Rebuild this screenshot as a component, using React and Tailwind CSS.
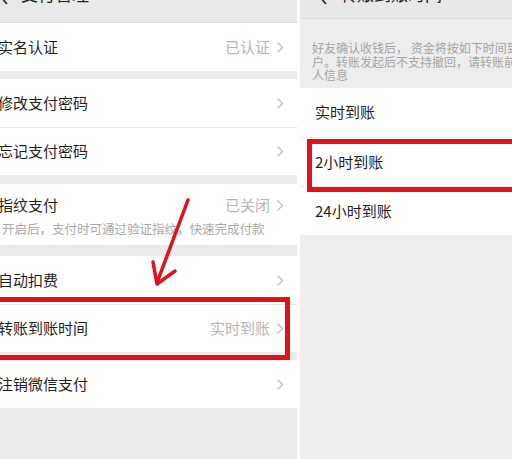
import React from 'react'

const font = { fontFamily: '"Noto Sans CJK SC", "Noto Sans", sans-serif' }

function Chevron() {
  return (
    <svg width="8" height="13" viewBox="0 0 8 13" className="ml-[6px] shrink-0">
      <polyline points="1.5,1.5 6.5,6.5 1.5,11.5" fill="none" stroke="#c4c4c4" strokeWidth="1.4" />
    </svg>
  )
}

function BackChevron() {
  return (
    <svg width="10" height="16" viewBox="0 0 10 16" className="shrink-0">
      <polyline points="8,1 2,8 8,15" fill="none" stroke="#333" strokeWidth="1.8" />
    </svg>
  )
}

function Row({ label, value, divider }) {
  return (
    <div className={`h-[48px] bg-white flex items-center pl-[1px] pr-[13px] ${divider ? 'border-t border-[#e6e6e6]' : ''}`}>
      <span className="flex-1 text-[15px] text-[#1f1f1f]">{label}</span>
      {value && <span className="text-[15px] text-[#b5b5b5]">{value}</span>}
      <Chevron />
    </div>
  )
}

function Option({ label, divider }) {
  return (
    <div className={`h-[49px] bg-white flex items-center pl-[15px] ${divider ? 'border-t border-[#eeeeee]' : ''}`}>
      <span className="text-[15px] text-[#1f1f1f]">{label}</span>
    </div>
  )
}

export default function App() {
  return (
    <div className="relative flex w-[512px] h-[459px] bg-white overflow-hidden" style={font}>
      {/* Left phone: 支付管理 */}
      <div className="w-[300px] -ml-[3px] mr-[3px] h-full bg-[#ebebeb] flex flex-col overflow-hidden">
        <div className="h-[23px] shrink-0 bg-[#e9e9e9] border-b border-[#dedede] flex items-start gap-[12px] pl-[2px] overflow-hidden">
          <div className="-mt-[11px]"><BackChevron /></div>
          <span className="-mt-[15px] text-[17px] leading-none text-[#222]">支付管理</span>
        </div>
        <Row label="实名认证" value="已认证" />
        <div className="h-[8px] shrink-0" />
        <Row label="修改支付密码" />
        <Row label="忘记支付密码" divider />
        <div className="h-[9px] shrink-0" />
        <div className="h-[61px] bg-white flex flex-col pl-[1px] pr-[13px]">
          <div className="h-[42px] flex items-center">
            <span className="flex-1 text-[15px] text-[#1f1f1f]">指纹支付</span>
            <span className="text-[15px] text-[#b5b5b5]">已关闭</span>
            <Chevron />
          </div>
          <span className="pl-[4px] -mt-[6px] text-[12.5px] text-[#a8a8a8] whitespace-nowrap">开启后，支付时可通过验证指纹，快速完成付款</span>
        </div>
        <div className="h-[11px] shrink-0" />
        <Row label="自动扣费" />
        <Row label="转账到账时间" value="实时到账" divider />
        <div className="h-[8px] shrink-0" />
        <Row label="注销微信支付" />
      </div>

      {/* Right phone: 转账到账时间 */}
      <div className="flex-1 h-full bg-[#efedf0] flex flex-col overflow-hidden">
        <div className="h-[19px] shrink-0 bg-[#e8e8e8] border-b border-[#dddddd] flex items-start gap-[12px] pl-[18px] overflow-hidden">
          <div className="-mt-[11px]"><BackChevron /></div>
          <span className="-mt-[15px] text-[17px] leading-none text-[#222]">转账到账时间</span>
        </div>
        <div className="h-[69px] shrink-0 bg-[#ededed] pt-[22px] pl-[12px] flex flex-col text-[12px] leading-[13.5px] text-[#a5a5a5] whitespace-nowrap">
          <span>好友确认收钱后， 资金将按如下时间到账</span>
          <span>户。转账发起后不支持撤回，请转账前核实收款</span>
          <span>人信息</span>
        </div>
        <Option label="实时到账" />
        <Option label="2小时到账" divider />
        <Option label="24小时到账" divider />
      </div>

      {/* Annotations */}
      <div className="absolute left-[-10px] top-[297px] w-[300px] h-[63px] border-[5px] border-[#e0121b]" />
      <div className="absolute left-[307px] top-[139px] w-[220px] h-[53px] border-[5px] border-[#e0121b]" />
      <svg className="absolute left-[140px] top-[190px]" width="60" height="110" viewBox="0 0 60 110">
        <line x1="48" y1="10" x2="18" y2="90" stroke="#e0121b" strokeWidth="3.5" strokeLinecap="round" />
        <polyline points="13,72 17,94 35,81" fill="none" stroke="#e0121b" strokeWidth="3.5" strokeLinecap="round" strokeLinejoin="round" />
      </svg>
    </div>
  )
}
